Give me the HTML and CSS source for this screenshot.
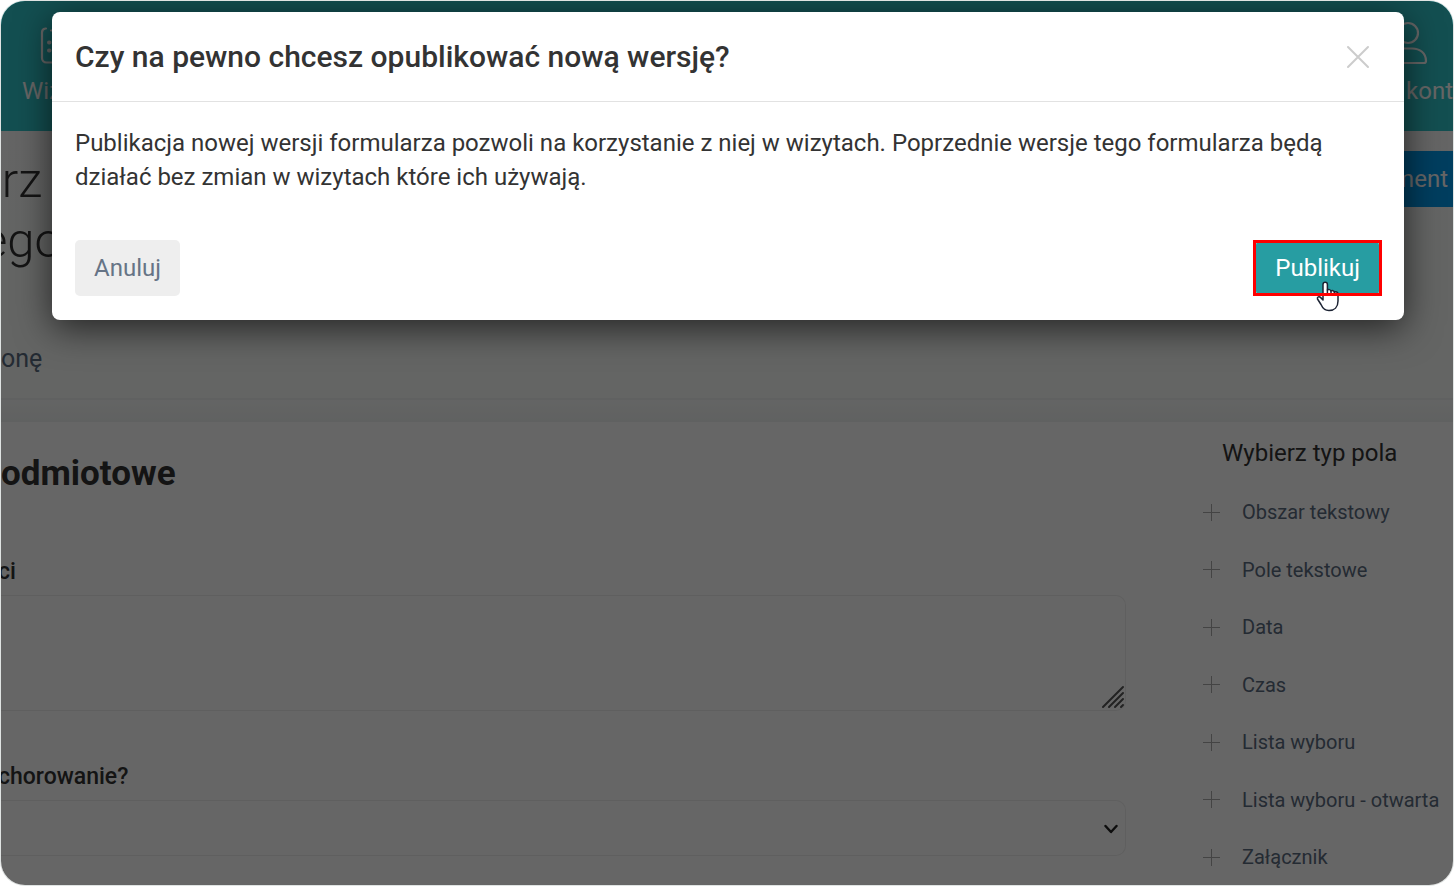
FILE: index.html
```html
<!DOCTYPE html>
<html lang="pl">
<head>
<meta charset="utf-8">
<title>Publikacja formularza</title>
<link rel="stylesheet" href="styles.css">
</head>
<body>
<div class="frame">
  <header class="topbar">
    <a class="nav-item nav-visits" href="#">
      <svg class="nav-icon" viewBox="0 0 44 44" fill="none" stroke="currentColor" stroke-width="2.2" stroke-linecap="round">
        <path d="M7 7.500H6.500a4 4 0 0 0-3.500 4V37a4.500 4.500 0 0 0 4.500 4.500h28A4.500 4.500 0 0 0 40 37V11.500a4 4 0 0 0-4-4M12 9.500h1M18 7.500h12"/>
        <path d="M10 21.500h.5M10 29.500h.5M17 21.500h.5M17 29.500h.5M24 21.500h.5M24 29.500h.5" stroke-width="4"/>
      </svg>
      <span>Wiz</span>
    </a>
    <a class="nav-item nav-account" href="#">
      <svg class="nav-icon" viewBox="0 0 44 44" fill="none" stroke="currentColor" stroke-width="2.2" stroke-linejoin="round">
        <circle cx="21" cy="12" r="10"/>
        <path d="M3 40c0-8 6-12.500 14-12.500h8c8 0 14 4.500 14 12.500 0 1.500-.5 2-2 2H5c-1.500 0-2-.5-2-2z"/>
      </svg>
      <span>kont</span>
    </a>
  </header>

  <section class="intro">
    <div class="intro-row">
      <h1 class="form-name">rz<br>ego</h1>
      <button class="add-button" type="button">ment</button>
    </div>
    <a class="page-link" href="#">onę</a>
  </section>
  <div class="divider"></div>

  <main class="editor">
    <form class="fields">
      <h2 class="section-title">odmiotowe</h2>
      <label class="field-label" for="complaints">ci</label>
      <div class="textarea-wrap">
        <textarea class="control area" id="complaints"></textarea>
        <svg class="grip" viewBox="0 0 24 24" fill="none" stroke="#555" stroke-width="2" stroke-linecap="round">
          <path d="M2 22L22 2M8 22L22 8M14 22l8-8M20 22l2-2"/>
        </svg>
      </div>
      <label class="field-label second" for="illness">chorowanie?</label>
      <div class="select-wrap">
        <select class="control choice" id="illness"><option></option></select>
        <svg class="chevron" viewBox="0 0 14 10" fill="none" stroke="#222" stroke-width="2.4" stroke-linecap="round" stroke-linejoin="round"><path d="M1.500 2L7 8l5.500-6"/></svg>
      </div>
    </form>
    <aside class="types">
      <h3 class="types-title">Wybierz typ pola</h3>
      <ul class="types-list">
        <li><button class="type" type="button"><span class="plus"></span>Obszar tekstowy</button></li>
        <li><button class="type" type="button"><span class="plus"></span>Pole tekstowe</button></li>
        <li><button class="type" type="button"><span class="plus"></span>Data</button></li>
        <li><button class="type" type="button"><span class="plus"></span>Czas</button></li>
        <li><button class="type" type="button"><span class="plus"></span>Lista wyboru</button></li>
        <li><button class="type" type="button"><span class="plus"></span>Lista wyboru - otwarta</button></li>
        <li><button class="type" type="button"><span class="plus"></span>Załącznik</button></li>
      </ul>
    </aside>
  </main>

  <div class="backdrop">
    <div class="modal" role="dialog" aria-modal="true" aria-labelledby="modal-title">
      <div class="modal-head">
        <h2 class="modal-title" id="modal-title">Czy na pewno chcesz opublikować nową wersję?</h2>
        <button class="close" type="button" aria-label="Zamknij">
          <svg viewBox="0 0 24 24" width="24" height="24" fill="none" stroke="#ccc" stroke-width="2" stroke-linecap="round"><path d="M2 2l20 20M22 2L2 22"/></svg>
        </button>
      </div>
      <p class="modal-text">Publikacja nowej wersji formularza pozwoli na korzystanie z niej w wizytach. Poprzednie wersje tego formularza będą działać bez zmian w wizytach które ich używają.</p>
      <div class="modal-actions">
        <button class="btn cancel" type="button">Anuluj</button>
        <div class="highlight">
          <button class="btn publish" type="button">Publikuj</button>
          <svg class="pointer" viewBox="0 0 24 31" fill="#fff" stroke="#1c2333" stroke-width="1.500" stroke-linejoin="round" stroke-linecap="round">
            <path d="M7 19V3.500a2.200 2.200 0 0 1 4.400 0V9c1-.8 3.200-.5 3.600 1 1.200-.8 3-.3 3.400 1 1.400-.6 3.600 0 3.600 2v7c0 6-3.500 9.500-9 9.500-4.500 0-6.500-2.500-8-6L1.500 18c-.6-2 1.600-3 3-1.600z"/>
            <path d="M11.400 9v5M15 10v4M18.400 11v3"/>
          </svg>
        </div>
      </div>
    </div>
  </div>
</div>
</body>
</html>
```
FILE: styles.css
```css
* { box-sizing: border-box; }

body {
  margin: 0;
  padding: 1px;
  background: #fff;
  font-family: Roboto, "Liberation Sans", sans-serif;
  font-size: 24px;
  color: #333;
}

h1, h2, h3, p, ul { margin: 0; padding: 0; }
button, select, textarea { font: inherit; }
button { border: 0; padding: 0; background: none; cursor: pointer; }
a { text-decoration: none; }

.frame {
  position: relative;
  display: flex;
  flex-direction: column;
  min-height: calc(100vh - 2px);
  border-radius: 24px;
  overflow: hidden;
  background: #fff;
  box-shadow: 0 0 0 1px #dfe3e2;
}

.topbar {
  display: flex;
  justify-content: space-between;
  height: 130px;
  padding: 20px 0 0 21px;
  background: #30c5ca;
}

.nav-item {
  display: flex;
  flex-direction: column;
  gap: 12px;
  line-height: 28px;
  color: #fff;
}
.nav-icon { width: 44px; height: 44px; }
.nav-visits .nav-icon { margin-left: 17px; }
.nav-account { align-items: flex-end; }
.nav-account .nav-icon { margin-right: 22px; }

.intro {
  height: 269px;
  padding-top: 20px;
  background: linear-gradient(#fcfcfc, #f9fcfa);
  border-bottom: 2px solid #f0f2f2;
}
.intro-row { display: flex; justify-content: space-between; align-items: flex-start; }
.form-name {
  width: 84px;
  margin-left: -21px;
  font-size: 49px;
  font-weight: 300;
  line-height: 60px;
  text-align: center;
  color: #333;
}
.add-button {
  height: 56px;
  padding: 0 5px 0 20px;
  background: #009bee;
  color: #fff;
}
.page-link { display: block; margin-top: 72px; font-size: 25px; line-height: 32px; color: #5b6b80; }
.divider { height: 22px; background: linear-gradient(#f9fbfa, #f0f3f2); }

.editor { display: flex; flex: 1; background: #fff; }
.fields { flex: 1; }
.section-title { padding-top: 28px; font-size: 35px; font-weight: 700; line-height: 48px; }
.field-label { display: block; margin: 60px 0 0 -3px; font-size: 23px; font-weight: 500; line-height: 28px; }
.field-label.second { margin-top: 52px; }

.control {
  display: block;
  width: 100%;
  margin: 0;
  border: 1px solid #eee;
  border-left: 0;
  border-radius: 0 10px 10px 0;
  background: #fff;
  appearance: none;
  outline: 0;
}
.area { height: 116px; resize: none; }
.choice { height: 56px; }
.textarea-wrap, .select-wrap { position: relative; margin-top: 9px; }
.grip { position: absolute; right: 1px; bottom: 2px; width: 24px; height: 24px; }
.chevron { position: absolute; right: 8px; top: 24px; width: 14px; height: 10px; }

.types { display: flex; flex-direction: column; width: 327px; padding: 17px 0 15px 77px; }
.types-title { margin-left: 19px; font-size: 24px; font-weight: 400; line-height: 28px; color: #333; }
.types-list {
  display: flex;
  flex: 1;
  flex-direction: column;
  justify-content: space-between;
  padding-top: 32px;
  list-style: none;
}
.type {
  display: flex;
  align-items: center;
  gap: 22px;
  font-size: 20px;
  line-height: 26px;
  white-space: nowrap;
  color: #5b6b80;
}
.plus {
  width: 17px;
  height: 17px;
  background:
    linear-gradient(#aaa, #aaa) center / 17px 1px no-repeat,
    linear-gradient(#aaa, #aaa) center / 1px 17px no-repeat;
}

.backdrop {
  position: absolute;
  inset: 0;
  padding: 11px 49px 0 51px;
  background: rgba(0, 0, 0, .6);
}
.modal {
  border-radius: 8px;
  background: #fff;
  box-shadow: 0 8px 36px rgba(0, 0, 0, .65);
}
.modal-head {
  display: flex;
  align-items: center;
  justify-content: space-between;
  height: 90px;
  padding: 0 34px 0 23px;
  border-bottom: 1px solid #e2e2e2;
}
.modal-title { font-size: 30px; font-weight: 500; line-height: 36px; }
.close { display: flex; }
.modal-text { padding: 24px 23px 46px; line-height: 34px; }
.modal-actions {
  display: flex;
  align-items: center;
  justify-content: space-between;
  padding: 0 22px 24px 23px;
}
.btn { height: 56px; padding: 0 19px; border-radius: 5px; line-height: 28px; }
.cancel { background: #eee; color: #667486; }
.highlight { position: relative; display: flex; padding: 0 3px; }
.highlight::after { content: ""; position: absolute; inset: 0; border: 3px solid #f00; pointer-events: none; }
.publish { background: #279da2; color: #fff; }
.pointer { position: absolute; left: 63px; top: 41px; width: 24px; height: 31px; }
```
